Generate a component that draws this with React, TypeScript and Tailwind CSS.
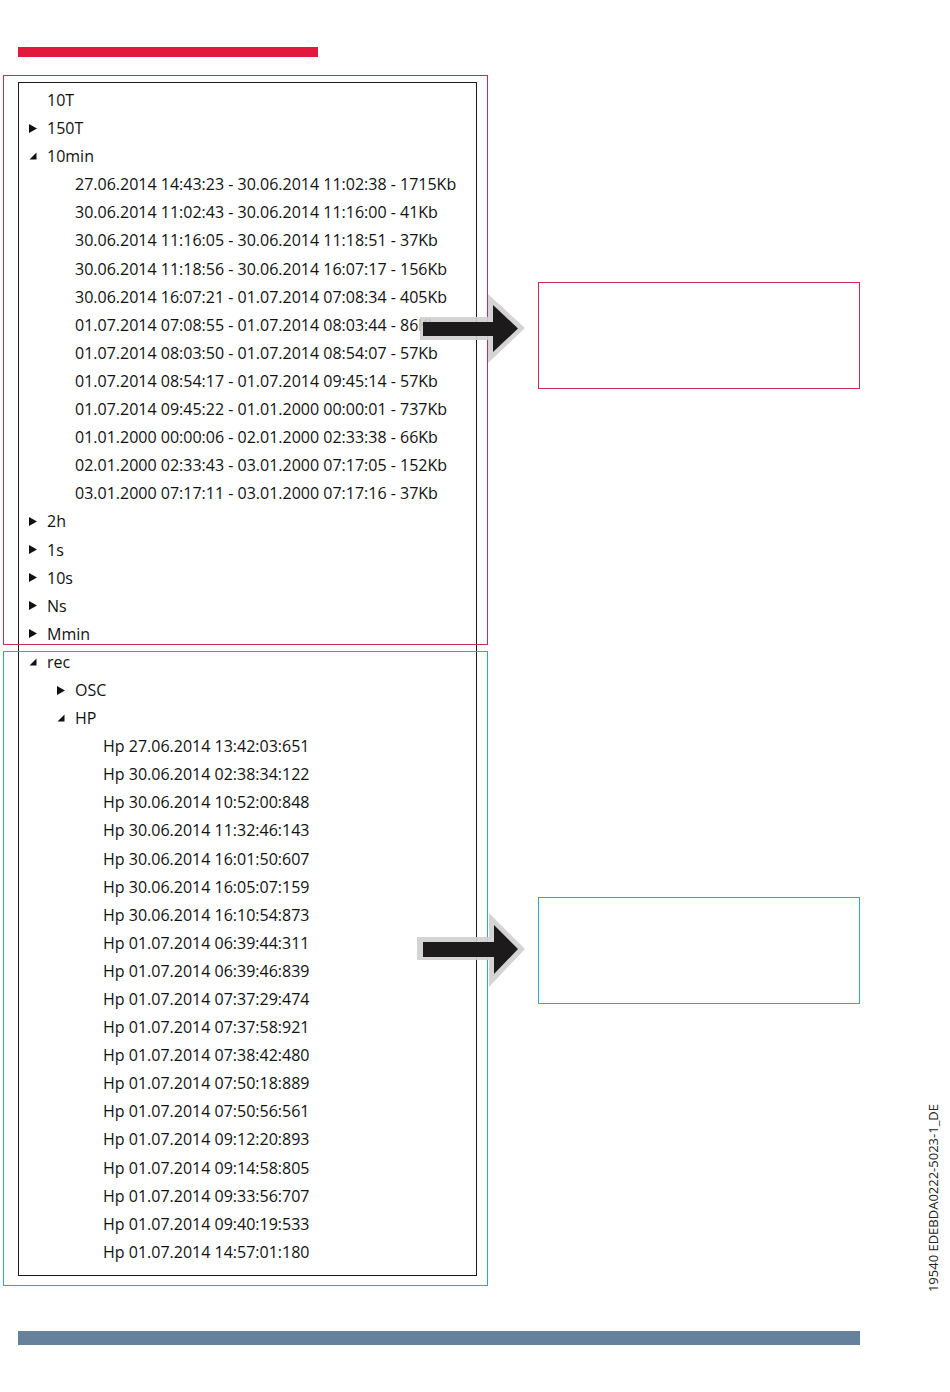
import React from "react";

type Row = { level: 0 | 1 | 2; text: string; toggle?: "open" | "closed" };

const entries10min = [
  "27.06.2014 14:43:23 - 30.06.2014 11:02:38 - 1715Kb",
  "30.06.2014 11:02:43 - 30.06.2014 11:16:00 - 41Kb",
  "30.06.2014 11:16:05 - 30.06.2014 11:18:51 - 37Kb",
  "30.06.2014 11:18:56 - 30.06.2014 16:07:17 - 156Kb",
  "30.06.2014 16:07:21 - 01.07.2014 07:08:34 - 405Kb",
  "01.07.2014 07:08:55 - 01.07.2014 08:03:44 - 86Kb",
  "01.07.2014 08:03:50 - 01.07.2014 08:54:07 - 57Kb",
  "01.07.2014 08:54:17 - 01.07.2014 09:45:14 - 57Kb",
  "01.07.2014 09:45:22 - 01.01.2000 00:00:01 - 737Kb",
  "01.01.2000 00:00:06 - 02.01.2000 02:33:38 - 66Kb",
  "02.01.2000 02:33:43 - 03.01.2000 07:17:05 - 152Kb",
  "03.01.2000 07:17:11 - 03.01.2000 07:17:16 - 37Kb",
];

const hpEntries = [
  "Hp 27.06.2014 13:42:03:651",
  "Hp 30.06.2014 02:38:34:122",
  "Hp 30.06.2014 10:52:00:848",
  "Hp 30.06.2014 11:32:46:143",
  "Hp 30.06.2014 16:01:50:607",
  "Hp 30.06.2014 16:05:07:159",
  "Hp 30.06.2014 16:10:54:873",
  "Hp 01.07.2014 06:39:44:311",
  "Hp 01.07.2014 06:39:46:839",
  "Hp 01.07.2014 07:37:29:474",
  "Hp 01.07.2014 07:37:58:921",
  "Hp 01.07.2014 07:38:42:480",
  "Hp 01.07.2014 07:50:18:889",
  "Hp 01.07.2014 07:50:56:561",
  "Hp 01.07.2014 09:12:20:893",
  "Hp 01.07.2014 09:14:58:805",
  "Hp 01.07.2014 09:33:56:707",
  "Hp 01.07.2014 09:40:19:533",
  "Hp 01.07.2014 14:57:01:180",
];

const rows: Row[] = [
  { level: 0, text: "10T" },
  { level: 0, text: "150T", toggle: "closed" },
  { level: 0, text: "10min", toggle: "open" },
  ...entries10min.map((t) => ({ level: 1 as const, text: t })),
  { level: 0, text: "2h", toggle: "closed" },
  { level: 0, text: "1s", toggle: "closed" },
  { level: 0, text: "10s", toggle: "closed" },
  { level: 0, text: "Ns", toggle: "closed" },
  { level: 0, text: "Mmin", toggle: "closed" },
  { level: 0, text: "rec", toggle: "open" },
  { level: 1, text: "OSC", toggle: "closed" },
  { level: 1, text: "HP", toggle: "open" },
  ...hpEntries.map((t) => ({ level: 2 as const, text: t })),
];

const indent = ["pl-[10px]", "pl-[38px]", "pl-[66px]"];

function Toggle({ kind }: { kind?: "open" | "closed" }) {
  if (!kind) return <span className="w-[8px] h-[8px]" />;
  if (kind === "closed") {
    return (
      <svg width="8" height="9" viewBox="0 0 8 9" className="block">
        <polygon points="0,0 8,4.5 0,9" fill="#111" />
      </svg>
    );
  }
  return (
    <svg width="8" height="8" viewBox="0 0 8 8" className="block">
      <polygon points="7.5,0.5 7.5,7.5 0.5,7.5" fill="#111" />
    </svg>
  );
}

function Arrow({ big }: { big?: boolean }) {
  return big ? (
    <svg width="110" height="80" viewBox="0 0 110 80" className="block">
      <polygon points="0,26 72,26 72,2 108,38 72,76 72,49 0,49" fill="#cfcfcf" fillOpacity="0.9" />
      <polygon points="6,31 77,31 77,14 101,38 77,63 77,46 6,46" fill="#1c1a1a" />
    </svg>
  ) : (
    <svg width="110" height="72" viewBox="0 0 110 72" className="block">
      <polygon points="3,24 71,24 71,1 108,35 71,70 71,47 3,47" fill="#cfcfcf" fillOpacity="0.9" />
      <polygon points="6,29 76,29 76,12 101,35.5 76,59 76,43 6,43" fill="#1c1a1a" />
    </svg>
  );
}

export default function App() {
  return (
    <div
      className="relative w-[950px] h-[1392px] bg-white overflow-hidden text-[#111]"
      style={{ fontFamily: '"Open Sans", "Noto Sans", "Liberation Sans", sans-serif' }}
    >
      <div className="pt-[47px] pl-[18px]">
        <div className="w-[300px] h-[10px] bg-[#e2183c]" />
      </div>

      <div className="flex items-start pl-[18px] mt-[25px]">
        <div className="w-[459px] h-[1194px] border border-[#1a1a1a] pt-[3px] flex flex-col">
          {rows.map((r, i) => (
            <div
              key={i}
              className={`flex items-center h-[28.1px] leading-[28.1px] text-[16px] whitespace-nowrap ${indent[r.level]}`}
            >
              <span className="w-[18px] flex items-center">
                <Toggle kind={r.toggle} />
              </span>
              <span>{r.text}</span>
            </div>
          ))}
        </div>

        <div className="ml-[61px] pt-[200px] flex flex-col">
          <div className="w-[322px] h-[107px] border border-[#cc2953]" />
          <div className="w-[322px] h-[107px] mt-[508px] border border-[#29a7d6]" />
        </div>
      </div>

      <div className="mt-[55px] ml-[18px] w-[842px] h-[14px] bg-[#66819b]" />

      {/* highlight overlays */}
      <div className="absolute left-[3px] top-[75px] w-[485px] h-[570px] border border-[#cc2953] pointer-events-none" />
      <div className="absolute left-[3px] top-[651px] w-[485px] h-[635px] border border-[#29a7d6] pointer-events-none" />

      <div className="absolute left-[417px] top-[293px]">
        <Arrow />
      </div>
      <div className="absolute left-[417px] top-[911px]">
        <Arrow big />
      </div>

      <div className="absolute left-[925px] top-[1104px] text-[13px] leading-[16px] text-[#222] [writing-mode:vertical-rl] rotate-180 whitespace-nowrap">
        19540 EDEBDA0222-5023-1_DE
      </div>
    </div>
  );
}
